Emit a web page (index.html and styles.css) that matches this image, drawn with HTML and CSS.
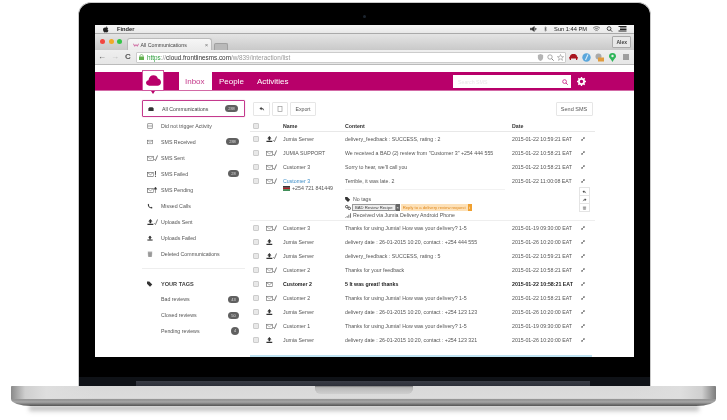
FILE: index.html
```html
<!DOCTYPE html>
<html lang="en">
<head>
<meta charset="utf-8">
<title>FrontlineSMS</title>
<link rel="stylesheet" href="styles.css">
</head>
<body>
<svg class="defs" width="0" height="0" aria-hidden="true">
  <defs>
    <symbol id="env" viewBox="0 0 8 6"><rect x=".5" y=".5" width="7" height="5" fill="none" stroke="#666" stroke-width=".8"/><path d="M.5 .8 4 3.4 7.5 .8" fill="none" stroke="#666" stroke-width=".7"/></symbol>
    <symbol id="envs" viewBox="0 0 13 7"><rect x=".5" y="1.5" width="7" height="5" fill="none" stroke="#777" stroke-width=".8"/><path d="M.5 2 4 4.4 7.5 2" fill="none" stroke="#777" stroke-width=".6"/><path d="M8.5 5 10 6.5 12.5 .5" fill="none" stroke="#555" stroke-width=".9"/></symbol>
    <symbol id="up" viewBox="0 0 8 7"><path d="M4 0 6.500 3H5v2H3V3H1.500zM.5 5.500h7V7h-7z" fill="#333"/></symbol>
    <symbol id="ups" viewBox="0 0 13 7"><path d="M4 0 6.500 3H5v2H3V3H1.500zM.5 5.500h7V7h-7z" fill="#333"/><path d="M8.500 5 10 6.500 12.500 .5" fill="none" stroke="#555" stroke-width=".9"/></symbol>
    <symbol id="exp" viewBox="0 0 6 6"><path d="M1 5 5 1M3.200 1H5v1.800M1 3.200V5h1.800" fill="none" stroke="#444" stroke-width=".9"/></symbol>
  </defs>
</svg>
<div class="laptop">
  <div class="lid">
    <span class="camera"></span>
    <div class="screen">
      <div class="menubar">
        <svg class="apple" viewBox="0 0 8 9"><path d="M4.100 2C4.800 1.500 6.300 1.500 7 2.700 5.700 3.600 6 5.300 7.300 5.800 6.800 7.300 5.900 8.500 5 8.500 4.500 8.500 4.300 8.200 3.700 8.200S2.900 8.500 2.400 8.500C1.300 8.500 0 6.300 0 4.600 0 2.300 2.300 1.200 4.100 2ZM4 1.700C4 .9 4.700.1 5.500 0 5.600.9 4.800 1.800 4 1.700Z" fill="#222"/></svg>
        <b class="finder">Finder</b>
        <span class="menu-right">
          <svg class="mi" viewBox="0 0 8 7"><path d="M0 2.500h2L5 .5v6L2 4.500H0zM6 2l1.500 1.500L6 5" fill="#333" stroke="#333" stroke-width=".5"/></svg>
          <svg class="mi bt" viewBox="0 0 4 8"><path d="M.3 2 3.400 5.500 2 7V1l1.400 1.500L.3 6" fill="none" stroke="#333" stroke-width=".6"/></svg>
          <span class="clock">Sun 1:44 PM</span>
          <svg class="mi wifi" viewBox="0 0 9 7"><path d="M.5 2.500C3 .2 6 .2 8.500 2.500M2 4C3.500 2.700 5.500 2.700 7 4M3.300 5.400C4 4.800 5 4.800 5.700 5.400" fill="none" stroke="#333" stroke-width=".8"/></svg>
          <svg class="mi" viewBox="0 0 7 7"><circle cx="3" cy="3" r="2.200" fill="none" stroke="#333"/><path d="M4.600 4.600 6.700 6.700" stroke="#333"/></svg>
          <svg class="mi list" viewBox="0 0 9 6"><path d="M.5.500h8M2 2h6.500M2 3.500h6.500M.5 5h8" stroke="#222"/></svg>
        </span>
      </div>
      <div class="tabbar">
        <span class="lights"><i class="red"></i><i class="amber"></i><i class="green"></i></span>
        <div class="tab">
          <svg class="tabicon" viewBox="0 0 7 4"><path d="M.5 .5 2 3.500 3.500 1.500 5 3.500 6.500 .5" fill="none" stroke="#c0307f" stroke-width=".8"/></svg>
          <span class="tabtitle">All Communications</span><span class="tabx">×</span>
        </div>
        <div class="newtab"></div>
        <span class="user">Alex</span>
      </div>
      <div class="toolbar">
        <span class="nav dark">←</span><span class="nav light">→</span><span class="nav dark">C</span>
        <div class="urlbar">
          <svg class="lock" viewBox="0 0 5 6"><path d="M1 2.500V1.700C1 .2 4 .2 4 1.700V2.500" fill="none" stroke="#5aa84a" stroke-width=".7"/><rect y="2.500" width="5" height="3.500" fill="#62b04e"/></svg>
          <span class="https">https</span><span class="urlgrey">://</span><span class="host">cloud.frontlinesms.com</span><span class="urlgrey">/w/839/interaction/list</span>
          <span class="url-right">
            <svg class="ui" viewBox="0 0 7 8"><path d="M.5 1 3.500 0 6.500 1V4C6.500 6 5 7.300 3.500 8 2 7.300.5 6 .5 4z" fill="#b4b4b4"/></svg>
            <svg class="ui" viewBox="0 0 7 7"><circle cx="3" cy="3" r="2.200" fill="none" stroke="#888" stroke-width=".7"/><path d="M4.600 4.600 6.700 6.700" stroke="#888"/></svg>
            <svg class="ui" viewBox="0 0 8 8"><path d="M4 .5 5 3H7.600L5.500 4.600 6.300 7.300 4 5.700 1.700 7.300 2.500 4.600.4 3H3z" fill="#fff" stroke="#888" stroke-width=".6"/></svg>
          </span>
        </div>
        <span class="exts">
          <svg class="ext" viewBox="0 0 9 8"><path d="M1 3C1 1 3 .5 4.500 .5S8 1 8 3L9 4 8 6.500H7V5H2V6.500H1L0 4z" fill="#a8151f"/></svg>
          <svg class="ext" viewBox="0 0 9 9"><circle cx="4.500" cy="4.500" r="4.200" fill="#5aa7dc"/><path d="M6 1.500 3.500 7" stroke="#d8ecf8" stroke-width="1.100"/></svg>
          <svg class="ext" viewBox="0 0 9 9"><circle cx="3.500" cy="3.500" r="3" fill="#aaa"/><rect x="3" y="4.500" width="6" height="4" fill="#e09b3e"/></svg>
          <svg class="ext" viewBox="0 0 7 9"><path d="M3.500 0C6 0 7 1.500 7 3.200 7 5 5 5.800 3.500 9 2 5.800 0 5 0 3.200 0 1.500 1 0 3.500 0z" fill="#2fb65a"/><circle cx="3.500" cy="3" r="1.200" fill="#eee"/></svg>
          <svg class="ext burger" viewBox="0 0 6 6"><path d="M0 1h6M0 3h6M0 5h6" stroke="#555" stroke-width="1.100"/></svg>
        </span>
      </div>
      <div class="page">
        <header class="apphead">
          <div class="logo">
            <svg viewBox="0 0 16 11"><path d="M3.500 11C1.500 11 0 9.700 0 8 0 6.300 1.300 5.300 2.600 5.100 3 2.200 5.300 0 8 0c2.300 0 4 1.300 4.600 3.300C14.600 3.600 16 5.400 16 7.300 16 9.500 14.400 11 12.300 11z" fill="#b8006a"/></svg>
          </div>
          <nav class="apptabs">
            <a class="apptab on">Inbox</a>
            <a class="apptab">People</a>
            <a class="apptab">Activities</a>
          </nav>
          <div class="search">
            <span>Search SMS</span>
            <svg viewBox="0 0 7 7"><circle cx="3" cy="3" r="2.200" fill="none" stroke="#c8147f" stroke-width=".9"/><path d="M4.600 4.600 6.700 6.700" stroke="#c8147f"/></svg>
          </div>
          <svg class="gear" viewBox="0 0 10 10"><circle cx="5" cy="5" r="2.900" fill="none" stroke="#fff" stroke-width="2"/><path d="M5 0v10M0 5h10M1.500 1.500l7 7M8.500 1.500l-7 7" stroke="#fff" stroke-width="1.500" stroke-dasharray="1.800 6.400 1.800"/></svg>
        </header>
        <div class="content">
          <aside class="side">
            <div class="item active"><svg class="si" viewBox="0 0 8 6"><path d="M.5 5.500V2L2 .5H6L7.500 2V5.500z" fill="#333"/></svg><span class="lab">All Communications</span><span class="badge">288</span></div>
            <div class="item"><svg class="si" viewBox="0 0 8 7"><rect x="1" y=".5" width="6" height="6" fill="none" stroke="#666" stroke-width=".8"/><path d="M1 3.500h6" stroke="#666" stroke-width=".8"/></svg><span class="lab">Did not trigger Activity</span></div>
            <div class="item"><svg class="si" viewBox="0 0 8 6"><use href="#env"/></svg><span class="lab">SMS Received</span><span class="badge">288</span></div>
            <div class="item"><svg class="sw" viewBox="0 0 13 7"><use href="#envs"/></svg><span class="lab">SMS Sent</span></div>
            <div class="item"><svg class="sw" viewBox="0 0 13 7"><use href="#env" width="8" height="6" y="1"/><path d="M10 0v4.500M10 5.500v1.500" stroke="#333"/></svg><span class="lab">SMS Failed</span><span class="badge small">28</span></div>
            <div class="item"><svg class="sw" viewBox="0 0 13 7"><use href="#env" width="8" height="6" y="1"/><path d="M10 0 11.500 2.500H8.500zM10 7V2.500" fill="#333" stroke="#333" stroke-width=".6"/></svg><span class="lab">SMS Pending</span></div>
            <div class="item"><svg class="si" viewBox="0 0 8 7"><path d="M2 .5 3 2 2.500 3C3 4 4 5 5 5.300L6 4.500 7.500 6 6 6.800C3.500 6.800 1 4 1 1.500z" fill="#333"/></svg><span class="lab">Missed Calls</span></div>
            <div class="item"><svg class="sw" viewBox="0 0 13 7"><use href="#ups"/></svg><span class="lab">Uploads Sent</span></div>
            <div class="item"><svg class="si" viewBox="0 0 8 7"><use href="#up"/></svg><span class="lab">Uploads Failed</span></div>
            <div class="item"><svg class="si" viewBox="0 0 8 8"><path d="M1.500 2h5L6 7.500H2zM1 1h6" fill="#999" stroke="#777" stroke-width=".5"/></svg><span class="lab">Deleted Communications</span></div>
            <hr class="rule">
            <div class="tags-head"><svg class="si" viewBox="0 0 8 7"><path d="M0 0H3L7 4 4 7 0 3z" fill="#333"/></svg><b>YOUR TAGS</b></div>
            <div class="tag"><span>Bad reviews</span><span class="badge small">43</span></div>
            <div class="tag"><span>Closed reviews</span><span class="badge small">50</span></div>
            <div class="tag"><span>Pending reviews</span><span class="badge tiny">4</span></div>
          </aside>
          <main class="main">
            <div class="actions">
              <span class="btn">
                <svg viewBox="0 0 7 6"><path d="M3 .5.500 2.500 3 4.500V3.300C4.500 3.300 5.500 4 6 5.500 6 3 5 1.700 3 1.700z" fill="#444"/></svg>
              </span>
              <span class="btn off">
                <svg viewBox="0 0 5 6"><rect x=".5" y=".5" width="4" height="5" fill="none" stroke="#999" stroke-width=".7"/></svg>
              </span>
              <span class="btn text">Export</span>
              <span class="btn text send">Send SMS</span>
            </div>
            <div class="row head"><i class="cb"></i><span class="ic"></span><b class="name">Name</b><b class="msg">Content</b><b class="date">Date</b></div>
            <div class="row"><i class="cb"></i><svg class="ic" viewBox="0 0 13 7"><use href="#ups"/></svg><span class="name">Jumia Server</span><span class="msg">delivery_feedback : SUCCESS, rating : 2</span><span class="date">2015-01-22 10:59:21 EAT</span><svg class="ex" viewBox="0 0 6 6"><use href="#exp"/></svg></div>
            <div class="row"><i class="cb"></i><svg class="ic" viewBox="0 0 13 7"><use href="#envs"/></svg><span class="name">JUMIA SUPPORT</span><span class="msg">We received a BAD (2) review from "Customer 3" +254 444 555</span><span class="date">2015-01-22 10:58:21 EAT</span><svg class="ex" viewBox="0 0 6 6"><use href="#exp"/></svg></div>
            <div class="row"><i class="cb"></i><svg class="ic" viewBox="0 0 13 7"><use href="#envs"/></svg><span class="name">Customer 3</span><span class="msg">Sorry to hear, we'll call you</span><span class="date">2015-01-22 10:58:21 EAT</span><svg class="ex" viewBox="0 0 6 6"><use href="#exp"/></svg></div>
            <div class="expanded">
              <div class="row bare"><i class="cb"></i><svg class="ic" viewBox="0 0 13 7"><use href="#envs"/></svg><span class="name link">Customer 3</span><span class="msg">Terrible, it was late. 2</span><span class="date">2015-01-22 11:00:08 EAT</span><svg class="ex" viewBox="0 0 6 6"><use href="#exp"/></svg></div>
              <div class="phone">
                <svg class="flag" viewBox="0 0 6 4"><rect width="6" height="1.300" fill="#111"/><rect y="1.300" width="6" height="1.400" fill="#b3202a"/><rect y="2.700" width="6" height="1.300" fill="#1c7a3a"/></svg>
                <span>+254 721 841449</span>
              </div>
              <div class="detail">
                <div class="dline"><svg class="di" viewBox="0 0 8 7"><path d="M0 0H3L7 4 4 7 0 3z" fill="#333"/></svg><span>No tags</span></div>
                <div class="dline pills"><svg class="di" viewBox="0 0 7 6"><circle cx="2" cy="2" r="1.500" fill="none" stroke="#333"/><circle cx="5" cy="4" r="1.500" fill="none" stroke="#333"/></svg><span class="pill grey">BAD Review Recipe</span><span class="pillend dark">×</span><span class="pill orange">Reply to a delivery review request</span><span class="pillend amber">i</span></div>
                <div class="dline"><svg class="di" viewBox="0 0 7 5"><path d="M0 4.500h1V5H0zM2 3h1v2H2zM4 1.500h1V5H4zM6 0h1v5H6z" fill="#666"/></svg><span>Received via Jumia Delivery Android Phone</span></div>
              </div>
              <div class="tools">
                <span class="tool"><svg viewBox="0 0 7 6"><path d="M3 .5.500 2.500 3 4.500V3.300C4.500 3.300 5.500 4 6 5.500 6 3 5 1.700 3 1.700z" fill="#444"/></svg></span>
                <span class="tool"><svg viewBox="0 0 7 6"><path d="M4 .5 6.500 2.500 4 4.500V3.300C2.500 3.300 1.500 4 1 5.500 1 3 2 1.700 4 1.700z" fill="#444"/></svg></span>
                <span class="tool"><svg viewBox="0 0 6 6"><path d="M1 1.500h4L4.600 5.700H1.400zM.5.800h5" fill="#aaa" stroke="#777" stroke-width=".4"/></svg></span>
              </div>
            </div>
            <div class="row"><i class="cb"></i><svg class="ic" viewBox="0 0 13 7"><use href="#envs"/></svg><span class="name">Customer 3</span><span class="msg">Thanks for using Jumia! How was your delivery? 1-5</span><span class="date">2015-01-19 09:30:00 EAT</span><svg class="ex" viewBox="0 0 6 6"><use href="#exp"/></svg></div>
            <div class="row"><i class="cb"></i><svg class="ic" viewBox="0 0 13 7"><use href="#up" width="8" height="7"/></svg><span class="name">Jumia Server</span><span class="msg">delivery date : 26-01-2015 10:20, contact : +254 444 555</span><span class="date">2015-01-26 10:20:00 EAT</span><svg class="ex" viewBox="0 0 6 6"><use href="#exp"/></svg></div>
            <div class="row"><i class="cb"></i><svg class="ic" viewBox="0 0 13 7"><use href="#ups"/></svg><span class="name">Jumia Server</span><span class="msg">delivery_feedback : SUCCESS, rating : 5</span><span class="date">2015-01-22 10:59:21 EAT</span><svg class="ex" viewBox="0 0 6 6"><use href="#exp"/></svg></div>
            <div class="row"><i class="cb"></i><svg class="ic" viewBox="0 0 13 7"><use href="#envs"/></svg><span class="name">Customer 2</span><span class="msg">Thanks for your feedback</span><span class="date">2015-01-22 10:58:21 EAT</span><svg class="ex" viewBox="0 0 6 6"><use href="#exp"/></svg></div>
            <div class="row unread"><i class="cb"></i><svg class="ic" viewBox="0 0 13 7"><use href="#env" width="8" height="6" y="1"/></svg><span class="name">Customer 2</span><span class="msg">5 It was great! thanks</span><span class="date">2015-01-22 10:58:21 EAT</span><svg class="ex" viewBox="0 0 6 6"><use href="#exp"/></svg></div>
            <div class="row"><i class="cb"></i><svg class="ic" viewBox="0 0 13 7"><use href="#envs"/></svg><span class="name">Customer 2</span><span class="msg">Thanks for using Jumia! How was your delivery? 1-5</span><span class="date">2015-01-22 10:58:21 EAT</span><svg class="ex" viewBox="0 0 6 6"><use href="#exp"/></svg></div>
            <div class="row"><i class="cb"></i><svg class="ic" viewBox="0 0 13 7"><use href="#up" width="8" height="7"/></svg><span class="name">Jumia Server</span><span class="msg">delivery date : 26-01-2015 10:20, contact : +254 123 123</span><span class="date">2015-01-26 10:20:00 EAT</span><svg class="ex" viewBox="0 0 6 6"><use href="#exp"/></svg></div>
            <div class="row"><i class="cb"></i><svg class="ic" viewBox="0 0 13 7"><use href="#envs"/></svg><span class="name">Customer 1</span><span class="msg">Thanks for using Jumia! How was your delivery? 1-5</span><span class="date">2015-01-19 09:30:00 EAT</span><svg class="ex" viewBox="0 0 6 6"><use href="#exp"/></svg></div>
            <div class="row"><i class="cb"></i><svg class="ic" viewBox="0 0 13 7"><use href="#up" width="8" height="7"/></svg><span class="name">Jumia Server</span><span class="msg">delivery date : 26-01-2015 10:20, contact : +254 123 321</span><span class="date">2015-01-26 10:20:00 EAT</span><svg class="ex" viewBox="0 0 6 6"><use href="#exp"/></svg></div>
            <div class="bluebar"></div>
          </main>
        </div>
      </div>
    </div>
    <div class="chin"></div>
    <div class="hinge"><span></span></div>
  </div>
  <div class="base"><span class="notch"></span></div>
  <div class="shadow"></div>
</div>
</body>
</html>
```
FILE: styles.css
```css
* { box-sizing: border-box; }
html, body { margin: 0; padding: 0; }
body { width: 727px; height: 420px; overflow: hidden; background: #fff; font-family: "Liberation Sans", Arial, sans-serif; color: #555; font-size: 5.250px; }
.defs { display: block; height: 0; }
svg { display: block; flex: none; }

.laptop { padding-top: 2px; }
.lid { position: relative; width: 573px; height: 384px; margin-left: 78px; padding: 22px 16px 0; background: #000; border: 1px solid #c9c9c9; border-bottom: 0; border-radius: 13px 13px 0 0; }
.camera { position: absolute; left: 284px; top: 12px; width: 3px; height: 3px; border-radius: 50%; background: #1c2530; }
.screen { height: 332px; background: #fff; overflow: hidden; filter: blur(.4px); display: flex; flex-direction: column; }
.chin { position: relative; z-index: 1; height: 20px; background: #000; border-radius: 0 0 5px 5px; margin: 0 -16px; }
.hinge { height: 9px; margin: 0 -16px; padding: 4px 60px 0 57px; background: #0f1217; }
.hinge span { display: block; height: 5px; background: linear-gradient(#3a3d46, #2c2f38); }

.base { position: relative; width: 705px; height: 20px; margin-left: 11px; border-radius: 1px 1px 20px 20px / 1px 1px 7px 7px; background: linear-gradient(#d8d8d8 0, #dcdcdc 62%, #8f8f8f 68%, #a8a8a8 80%, #555 100%); overflow: hidden; display: flex; justify-content: center; }
.base::before { content: ""; position: absolute; inset: 0; background: linear-gradient(90deg, #8a8a8a 0, #cfcfcf 2%, #dedede 5%, rgba(222,222,222,0) 12%, rgba(222,222,222,0) 88%, #dedede 95%, #cfcfcf 98%, #7c7c7c 100%); height: 13px; }
.notch { position: relative; width: 98px; height: 8px; border-radius: 0 0 6px 6px; background: linear-gradient(#b2b2b2, #cfcfcf); box-shadow: inset 0 1px 1px #888; }
.shadow { width: 670px; height: 7px; margin-left: 29px; background: linear-gradient(rgba(90,90,90,.6), rgba(255,255,255,0)); filter: blur(2px); }

.menubar { height: 9px; flex: none; display: flex; align-items: center; padding: 0 7px 0 8px; background: linear-gradient(#f7f7f7, #e8e8e8); border-bottom: 1px solid #aaa; font-size: 5.700px; color: #222; }
.apple { width: 6px; height: 7px; margin-right: 8px; }
.finder { font-weight: bold; }
.menu-right { margin-left: auto; display: flex; align-items: center; gap: 5px; }
.mi { width: 7px; height: 6px; }
.mi.bt { width: 3px; margin: 0 2px; }
.mi.wifi { width: 9px; }
.mi.list { width: 9px; }

.tabbar { height: 16px; flex: none; display: flex; align-items: flex-end; padding-left: 5px; background: linear-gradient(#e4e4e4, #c9c9c9); }
.lights { display: flex; gap: 3.700px; align-self: center; margin-right: 5px; margin-top: -1px; }
.lights i { width: 5px; height: 5px; border-radius: 50%; }
.red { background: #f2453f; }
.lights .amber { background: #f0aa28; }
.lights .green { background: #33c548; }
.tab { width: 85px; height: 12px; display: flex; align-items: center; padding: 0 3px 0 5px; background: linear-gradient(#f6f6f6, #ebebeb); border: 1px solid #bbb; border-bottom: 0; border-radius: 3px 3px 0 0; color: #444; }
.tabicon { width: 6px; height: 4px; margin-right: 1px; }
.tabtitle { white-space: nowrap; }
.tabx { margin-left: auto; color: #777; font-size: 6px; }
.newtab { width: 14px; height: 7px; margin-left: 2px; background: #b9b9b9; border: 1px solid #a0a0a0; border-bottom: 0; border-radius: 2px 2px 0 0; }
.user { align-self: center; margin-left: auto; margin-right: 3px; padding: 2px 3px; background: #e8e8e8; border: 1px solid #aaa; border-radius: 1px; font-weight: bold; font-size: 5px; color: #444; }

.toolbar { height: 15px; flex: none; display: flex; align-items: center; padding: 0 5px 0 .5px; background: linear-gradient(#efefef, #e6e6e6); border-bottom: 1px solid #bbb; }
.nav { width: 13px; text-align: center; font-size: 8px; line-height: 8px; font-weight: bold; }
.nav.dark { color: #555; }
.nav.light { color: #bbb; }
.urlbar { flex: 1; height: 11px; margin: 0 2.500px 0 1.500px; display: flex; align-items: center; padding: 0 1px 0 2px; background: #fff; border: 1px solid #ccc; border-radius: 1px; font-size: 6.350px; color: #333; white-space: nowrap; }
.lock { width: 5px; height: 6px; margin-right: 3px; }
.https { color: #2f9e3f; }
.urlgrey { color: #999; }
.host { color: #333; }
.url-right { margin-left: auto; display: flex; gap: 3px; align-items: center; }
.ui { width: 7px; height: 7px; }
.exts { display: flex; align-items: center; gap: 4px; }
.ext { width: 9px; height: 9px; }
.ext.burger { width: 6px; height: 6px; margin-left: 2.500px; }

.page { flex: 1; min-height: 0; padding-top: 7px; display: flex; flex-direction: column; }
.apphead { height: 19px; flex: none; display: flex; align-items: stretch; padding-left: 47px; background: #b8006a; border-bottom: 1px solid #d36aa6; }
.logo { position: relative; width: 22px; height: 21px; margin-top: -2px; display: flex; align-items: center; justify-content: center; background: #fff; border: 1px solid #d0589f; }
.logo svg { width: 15px; height: 11px; }
.logo::after { content: ""; position: absolute; bottom: -4px; left: 8px; border: 2px solid transparent; border-top-color: #b8006a; border-bottom: 0; border-top-width: 3px; }
.apptabs { display: flex; margin-left: 15px; font-size: 8px; color: #fff; }
.apptab { display: flex; align-items: center; padding: 0 6px 0 7px; }
.apptab.on { width: 33px; padding-left: 6px; background: #fff; color: #c4398a; }
.search { width: 118px; height: 13px; margin: 3px 0 0 auto; display: flex; align-items: center; justify-content: space-between; padding: 0 3px 0 5px; background: #fff; color: #e8e8e8; }
.search svg { width: 6px; height: 6px; }
.gear { width: 9px; height: 9px; margin: 5px 48px 0 6px; }

.content { flex: 1; min-height: 0; display: flex; padding: 9px 0 0 47px; gap: 5px; }
.side { width: 103px; flex: none; }
.item { height: 16px; display: flex; align-items: center; padding-left: 5px; color: #555; }
.item.active { height: 17px; margin-bottom: .5px; padding-left: 5px; border: 1px solid #c43a8d; border-radius: 1px; color: #444; box-shadow: 0 0 1px #d97fb6; }
.si { width: 6px; height: 6px; margin-right: 8px; }
.sw { width: 11px; height: 6px; margin-right: 3px; }
.badge { margin-left: auto; margin-right: 6px; min-width: 13px; height: 7px; line-height: 7px; padding: 0 2px; border-radius: 3.500px; background: #606060; color: #ddd; font-size: 4px; text-align: center; }
.item.active .badge { margin-right: 6px; }
.badge.small { min-width: 11px; }
.badge.tiny { min-width: 8px; width: 8px; height: 8px; line-height: 8px; padding: 0; border-radius: 50%; }
.rule { height: 0; margin: 6.500px 0 8px; border: 0; border-top: 1px solid #eee; }
.tags-head { height: 14px; padding-bottom: 0; display: flex; align-items: center; padding-left: 5px; color: #444; }
.tags-head b { font-size: 5.600px; }
.tag { height: 16px; display: flex; align-items: center; padding-left: 19px; }

.main { width: 345px; flex: none; }
.actions { height: 17px; display: flex; align-items: center; gap: 1px; margin-bottom: 3px; padding: 0 2.500px 0 3px; }
.btn { height: 14px; display: flex; align-items: center; justify-content: center; width: 17px; border: 1px solid #e6e6e6; border-radius: 1px; color: #555; }
.btn svg { width: 6px; height: 6px; }
.btn.off { margin-left: 1px; width: 16px; }
.btn.text { width: 26px; margin-left: 1px; }
.btn.send { margin-left: auto; width: 37px; font-size: 5.500px; }
.row { height: 14px; display: flex; align-items: center; padding-left: 3px; white-space: nowrap; color: #555; }
.row.bare { height: 13px; }
.row.head { height: 12px; color: #333; border-bottom: 1px solid #e8e8e8; }
.cb { width: 6px; height: 6px; flex: none; background: #e8e8e8; border: 1px solid #ccc; border-radius: 1px; }
.ic { width: 11px; height: 6px; flex: none; margin-left: 7px; margin-right: 6px; }
span.ic { display: block; }
.name { width: 62px; flex: none; }
.msg { width: 167px; flex: none; overflow: hidden; }
.date { width: 69px; flex: none; }
.ex { width: 4px; height: 4px; }
.link { color: #3b8dc7; }
.unread { color: #222; font-weight: bold; }
.expanded { position: relative; height: 47px; border-bottom: 1px solid #eee; }
.phone { display: flex; align-items: center; gap: 2px; padding-left: 33px; height: 6px; margin-top: -2px; }
.flag { width: 7px; height: 5px; }
.detail { margin: -2px 0 0 95px; width: 160px; padding-top: 5px; border-top: 1px solid #f2f2f2; }
.dline { height: 8px; display: flex; align-items: center; gap: 1px; white-space: nowrap; }
.di { width: 6px; height: 5px; margin-right: 1px; }
.pill { height: 7px; line-height: 6px; padding: 0 2px; font-size: 4.200px; }
.pill.grey { border: 1px solid #999; background: #eee; color: #444; }
.pill.orange { background: #fde1b8; color: #e08a20; margin-left: 1px; line-height: 7px; }
.pills { gap: 0; }
.pillend { height: 7px; width: 4px; line-height: 7px; font-size: 4px; text-align: center; color: #fff; }
.pillend.dark { background: #666; }
.pillend.amber { background: #f0a030; }
.tools { position: absolute; left: 329px; top: 13px; display: flex; flex-direction: column; }
.tool { width: 11px; height: 9px; display: flex; align-items: center; justify-content: center; border: 1px solid #e4e4e4; }
.tool + .tool { margin-top: -1px; }
.tool svg { width: 5px; height: 4px; }
.bluebar { width: 342px; height: 2px; margin-top: 8px; background: #bfe3f2; }
```
